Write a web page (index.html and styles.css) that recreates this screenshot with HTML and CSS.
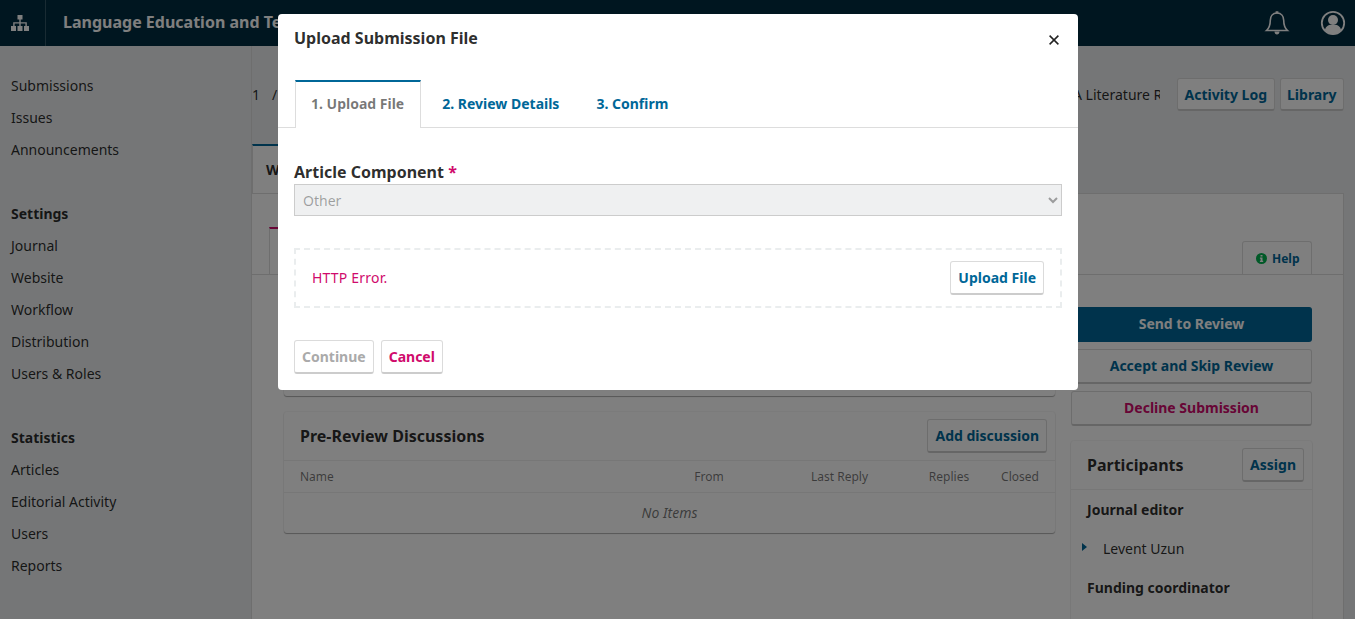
FILE: index.html

```html
<!DOCTYPE html>
<html lang="en">
<head>
  <meta charset="UTF-8" />
  <meta name="viewport" content="width=device-width, initial-scale=1.0"/>
  <title>Upload Submission File</title>
  <link rel="stylesheet" href="styles.css">
</head>
<body>
  <header class="topbar">
    <a class="home-link">
      <svg width="18" height="16" viewBox="0 0 18 16"><path fill="#fff" d="M6.5 0h5v4.500h-5zM0 11h5v5H0zM6.500 11h5v5h-5zM13 11h5v5h-5zM8.300 4.500h1.400v2.700h6.100V11h-1.400V8.600H9.700V11H8.300V8.600H3.600V11H2.200V7.200h6.100z"/></svg>
    </a>
    <div class="site-name">Language Education and Technology</div>
    <div class="topbar-icons">
      <svg width="26" height="26" viewBox="0 0 26 26"><path fill="none" stroke="#fff" stroke-width="1.600" d="M13 3c-4.400 0-6.700 3.300-6.700 7.300 0 6-1.300 8-3.800 10.200h21c-2.500-2.200-3.800-4.200-3.800-10.200C19.700 6.300 17.400 3 13 3z"/><path fill="#fff" d="M11.600 1.300h2.800v2.200h-2.800zM10.500 21.500h5c0 1.800-1.100 3-2.500 3s-2.500-1.200-2.500-3z"/></svg>
      <svg width="26" height="26" viewBox="0 0 26 26"><circle cx="13" cy="13" r="11.200" fill="none" stroke="#fff" stroke-width="1.800"/><circle cx="13" cy="10" r="5" fill="#fff"/><path fill="#fff" d="M4.800 20c1-3.600 3.800-5.200 6-5.200h4.400c2.200 0 5 1.600 6 5.200-2 2.700-5 4.200-8.200 4.200S6.800 22.700 4.800 20z"/></svg>
    </div>
  </header>

  <div class="layout">
    <nav class="sidebar">
      <ul class="nav-group">
        <li>Submissions</li>
        <li>Issues</li>
        <li>Announcements</li>
      </ul>
      <ul class="nav-group">
        <li class="nav-head">Settings</li>
        <li>Journal</li>
        <li>Website</li>
        <li>Workflow</li>
        <li>Distribution</li>
        <li>Users &amp; Roles</li>
      </ul>
      <ul class="nav-group">
        <li class="nav-head">Statistics</li>
        <li>Articles</li>
        <li>Editorial Activity</li>
        <li>Users</li>
        <li>Reports</li>
      </ul>
    </nav>

    <main class="main">
      <div class="crumbs">
        <span>1</span>
        <span class="crumb-sep">/</span>
        <span class="crumb-title">A Literature Review</span>
        <button class="btn">Activity Log</button>
        <button class="btn">Library</button>
      </div>

      <div class="stage-tabs">
        <div class="stage-tab">Workflow</div>
      </div>

      <section class="panel">
        <div class="sub-tabs">
          <div class="sub-tab">Submission</div>
          <div class="help-tab">
            <svg width="11" height="11" viewBox="0 0 11 11"><circle cx="5.500" cy="5.500" r="5.500" fill="#00b24e"/><path fill="#fff" d="M4.500 2h2v1.600h-2zM3.900 4.500h2.600v3.300h.7v1.200H3.900V7.800h.7V5.700h-.7z"/></svg>
            Help
          </div>
        </div>

        <div class="workflow">
          <div class="col-left">
            <div class="card card-files"></div>
            <div class="card">
              <div class="card-head">
                <h2>Pre-Review Discussions</h2>
                <button class="btn">Add discussion</button>
              </div>
              <div class="table-row table-head">
                <span>Name</span>
                <span class="cell-c">From</span>
                <span class="cell-c">Last Reply</span>
                <span class="cell-c">Replies</span>
                <span class="cell-c">Closed</span>
              </div>
              <div class="table-empty">No Items</div>
            </div>
          </div>

          <div class="col-right">
            <button class="btn btn-wide btn-primary">Send to Review</button>
            <button class="btn btn-wide">Accept and Skip Review</button>
            <button class="btn btn-wide btn-danger">Decline Submission</button>
            <div class="card participants">
              <div class="card-head">
                <h2>Participants</h2>
                <button class="btn">Assign</button>
              </div>
              <div class="role role-first">Journal editor</div>
              <div class="person"><i class="arrow"></i>Levent Uzun</div>
              <div class="role">Funding coordinator</div>
            </div>
          </div>
        </div>
      </section>
    </main>
  </div>

  <div class="overlay">
    <div class="modal">
      <div class="modal-head">
        <h1>Upload Submission File</h1>
        <svg class="modal-close" width="10" height="10" viewBox="0 0 10 10"><path stroke="#222" stroke-width="1.500" d="M.6.6l8.800 8.800M9.400.6L.6 9.400"/></svg>
      </div>
      <div class="modal-tabs">
        <div class="modal-tab active">1. Upload File</div>
        <div class="modal-tab">2. Review Details</div>
        <div class="modal-tab">3. Confirm</div>
      </div>
      <form class="modal-body">
        <label class="field-label">Article Component <span class="req">*</span></label>
        <select class="field-select" disabled>
          <option>Other</option>
        </select>
        <div class="dropzone">
          <span class="error-text">HTTP Error.</span>
          <button type="button" class="btn">Upload File</button>
        </div>
        <div class="modal-actions">
          <button type="button" class="btn btn-disabled">Continue</button>
          <button type="button" class="btn btn-danger">Cancel</button>
        </div>
      </form>
    </div>
  </div>
</body>
</html>
```

FILE: styles.css

```css
* { margin: 0; padding: 0; box-sizing: border-box; }
html, body { height: 100%; overflow: hidden; }
body {
  font-family: "Noto Sans", sans-serif;
  font-size: 14px;
  line-height: 20px;
  color: rgba(0, 0, 0, 0.84);
  background-color: #eaedee;
}
ul { list-style: none; }

.btn {
  font-family: inherit;
  font-size: 14px;
  font-weight: 700;
  line-height: 20px;
  color: #006798;
  background: #fff;
  border: 1px solid rgba(0, 0, 0, 0.14);
  border-bottom: 2px solid rgba(0, 0, 0, 0.2);
  border-radius: 3px;
  padding: 6px 7px 5px;
  white-space: nowrap;
}
.btn-wide { display: block; width: 100%; }
.btn-primary { color: #fff; background: #006798; border-color: #006798; }
.btn-danger { color: #d00a6c; }
.btn-disabled { color: #aaa; }

/* top bar */
.topbar {
  height: 46px;
  background: #002c40;
  color: #fff;
  display: flex;
  align-items: center;
}
.home-link {
  width: 46px;
  height: 46px;
  border-right: 1px solid rgba(255, 255, 255, 0.2);
  display: flex;
  align-items: center;
  justify-content: center;
  padding-right: 5px;
}
.site-name { margin-left: 17px; font-size: 16px; font-weight: 700; padding-bottom: 2px; }
.topbar-icons {
  margin-left: auto;
  margin-right: 9px;
  display: flex;
  align-items: center;
  gap: 30px;
}

.layout { display: flex; height: 573px; overflow: hidden; }

/* side nav */
.sidebar {
  width: 252px;
  flex: none;
  padding: 24px 0 0 11px;
  border-right: 1px solid #ddd;
}
.nav-group { margin-bottom: 32px; }
.nav-group li { height: 32px; line-height: 32px; }
.nav-head { font-weight: 700; }

.main { flex: 1; min-width: 0; padding-right: 11px; }

.crumbs {
  display: flex;
  align-items: center;
  gap: 5px;
  padding-top: 32px;
}
.crumbs .btn { height: 33px; padding: 5px 6.5px 4px; }
.crumb-sep { margin-left: 7px; }
.crumb-title {
  margin-left: auto;
  margin-right: 12px;
  width: 87px;
  overflow: hidden;
  white-space: nowrap;
}
.stage-tabs { margin-top: 33px; display: flex; }
.stage-tab {
  width: 110px;
  height: 49px;
  padding: 14px 13px;
  font-weight: 700;
  background: #fff;
  border: 1px solid #ddd;
  border-top: 2px solid #006798;
  border-bottom: none;
}

.panel {
  background: #fff;
  border: 1px solid #ddd;
  border-left: none;
  border-bottom: none;
  height: 426px;
  overflow: hidden;
  padding-top: 34px;
}
.sub-tabs {
  height: 47px;
  display: flex;
  justify-content: space-between;
  align-items: flex-end;
  padding: 0 31px 0 17px;
  border-bottom: 1px solid #ddd;
}
.sub-tab {
  height: 47px;
  padding: 12px 16px;
  font-weight: 700;
  color: #006798;
  border: 1px solid #ddd;
  border-top: 2px solid #d00a6c;
  border-bottom: none;
}
.help-tab {
  height: 33px;
  width: 70px;
  display: flex;
  align-items: center;
  gap: 5px;
  padding: 1px 0 0 13px;
  font-size: 12px;
  font-weight: 700;
  color: #006798;
  border: 1px solid #ddd;
  border-bottom: none;
  border-radius: 3px 3px 0 0;
}

.workflow {
  display: flex;
  gap: 16px;
  padding: 32px 31px 0 32px;
}
.col-left { flex: 1; min-width: 0; display: flex; flex-direction: column; gap: 16px; }
.col-right { width: 241px; flex: none; display: flex; flex-direction: column; gap: 7px; }
.col-right .btn-wide { height: 35px; padding: 0; flex: none; }

.card {
  background: #fff;
  border-radius: 3px;
  box-shadow: 0 1px 1px rgba(0, 0, 0, 0.3), 0 0 0 1px rgba(0, 0, 0, 0.03);
}
.card-files { height: 89px; }
.card-head {
  display: flex;
  justify-content: space-between;
  align-items: center;
  height: 49px;
  padding: 0 8px 1px 16px;
  border-bottom: 1px solid #eee;
}
.card-head h2 { font-size: 16px; font-weight: 700; }

.table-row {
  display: grid;
  grid-template-columns: 1fr 114px 147px 72px 70px;
  align-items: center;
  height: 32px;
  padding: 1px 0 0 16px;
  border-bottom: 1px solid #eee;
}
.table-head { font-size: 12px; color: rgba(0, 0, 0, 0.54); }
.cell-c { text-align: center; }
.table-empty {
  height: 40px;
  line-height: 40px;
  text-align: center;
  font-style: italic;
  color: rgba(0, 0, 0, 0.54);
}

.participants { margin-top: 8px; padding-bottom: 40px; }
.role { padding: 11px 16px 0; height: 39px; line-height: 20px; font-weight: 700; }
.role-first { padding-top: 10px; height: 38px; }
.person { position: relative; height: 39px; line-height: 41px; padding-left: 32px; }
.arrow {
  position: absolute;
  left: 11px;
  top: 15px;
  border-left: 5px solid #006798;
  border-top: 4px solid transparent;
  border-bottom: 4px solid transparent;
}

/* dialog */
.overlay {
  position: absolute;
  top: 0;
  left: 0;
  right: 0;
  bottom: 0;
  background: rgba(0, 0, 0, 0.5);
  display: flex;
  justify-content: center;
  align-items: flex-start;
  padding: 14px 0 0 1px;
}
.modal {
  width: 800px;
  height: 376px;
  background: #fff;
  border-radius: 4px;
}
.modal-head {
  display: flex;
  justify-content: space-between;
  padding: 14px 19px 0 16px;
  height: 66px;
}
.modal-head h1 { font-size: 16px; font-weight: 700; line-height: 20px; }
.modal-close { margin-top: 7px; }
.modal-tabs {
  display: flex;
  gap: 5px;
  height: 48px;
  padding-left: 17px;
  border-bottom: 1px solid #ddd;
}
.modal-tab {
  height: 48px;
  padding: 14px 16px 0;
  font-weight: 700;
  color: #006798;
}
.modal-tab.active {
  color: rgba(0, 0, 0, 0.54);
  background: #fff;
  border: 1px solid #ddd;
  border-top: 2px solid #006798;
  border-bottom: none;
  padding: 12px 16px 0 15px;
}
.modal-body { padding: 34px 16px 0; }
.field-label { display: block; font-size: 16px; font-weight: 700; line-height: 20px; margin-bottom: 2px; }
.req { color: #d00a6c; }
.field-select {
  display: block;
  width: 100%;
  height: 32px;
  font-family: inherit;
  font-size: 14px;
  padding: 0 4px;
  color: rgba(0, 0, 0, 0.35);
  background: #eff0f1;
  border: 1px solid #ccc;
  border-radius: 0;
  opacity: 1;
}
.dropzone {
  margin-top: 32px;
  height: 60px;
  display: flex;
  align-items: center;
  justify-content: space-between;
  padding: 0 16px;
  border: 2px dashed #eaedee;
}
.error-text { color: #d00a6c; letter-spacing: 0.2px; }
.modal-actions { display: flex; gap: 7px; margin-top: 32px; }
```
